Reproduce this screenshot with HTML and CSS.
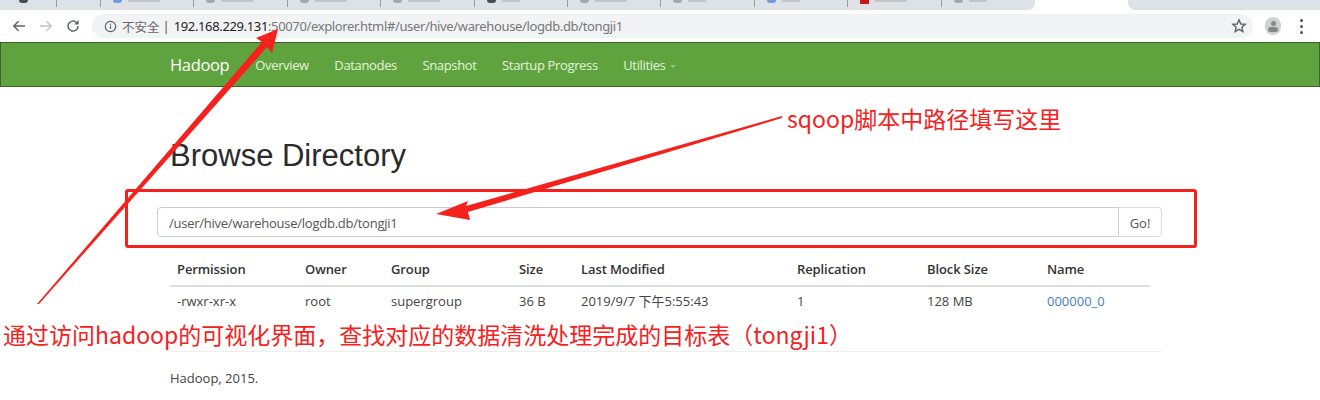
FILE: index.html
```html
<!DOCTYPE html>
<html lang="zh">
<head>
  <meta charset="UTF-8">
  <title>Browse Directory</title>
  <link rel="stylesheet" href="styles.css">
</head>
<body>
  <div class="tabstrip">
    <div class="tabs-left">
      <div class="tab tab-first"><span class="tab-fav fav-dark"></span></div>
      <div class="tab tab-small"></div>
      <div class="tab"><span class="tab-fav fav-blue"></span><span class="tab-text t2"></span></div>
      <div class="tab"><span class="tab-fav"></span><span class="tab-text t2"></span></div>
      <div class="tab"><span class="tab-fav"></span><span class="tab-text t2"></span></div>
      <div class="tab"><span class="tab-fav"></span><span class="tab-text t2"></span></div>
      <div class="tab"><span class="tab-fav fav-dark"></span><span class="tab-text t1"></span></div>
      <div class="tab"><span class="tab-fav"></span><span class="tab-text t2"></span></div>
      <div class="tab"><span class="tab-fav"></span><span class="tab-text t1"></span></div>
      <div class="tab"><span class="tab-fav fav-blue"></span><span class="tab-text t1"></span></div>
      <div class="tab"><span class="tab-fav fav-red"></span><span class="tab-text t2"></span></div>
      <div class="tab tab-last"><span class="tab-fav"></span><span class="tab-text t1"></span></div>
    </div>
    <div class="tab-active"><span class="tab-fav fav-dark"></span></div>
    <div class="tab-rest"><span class="tab-fav"></span></div>
  </div>

  <div class="toolbar">
    <svg class="nav-icon" viewBox="0 0 16 16"><path d="M14 8H3M7.500 3.200 2.800 8l4.700 4.800" fill="none" stroke="#5f6368" stroke-width="1.500"/></svg>
    <svg class="nav-icon" viewBox="0 0 16 16"><path d="M2 8h11M8.500 3.200 13.200 8l-4.700 4.800" fill="none" stroke="#c0c3c7" stroke-width="1.500"/></svg>
    <svg class="nav-icon" viewBox="0 0 16 16"><path d="M13 8a5 5 0 1 1-1.500-3.500" fill="none" stroke="#5f6368" stroke-width="1.500"/><path d="M13.600 2v4.400H9.200z" fill="#5f6368"/></svg>
    <div class="omnibox">
      <svg class="info-icon" viewBox="0 0 14 14"><circle cx="7" cy="7" r="5.600" fill="none" stroke="#5f6368" stroke-width="1.300"/><path d="M7 6.200v3.600M7 4v1.300" stroke="#5f6368" stroke-width="1.300"/></svg>
      <span class="not-secure">不安全</span>
      <span class="sep">|</span>
      <span class="url"><span class="host">192.168.229.131</span>:50070/explorer.html#/user/hive/warehouse/logdb.db/tongji1</span>
      <svg class="star" viewBox="0 0 16 16"><path d="M8 1.900 9.800 6l4.400.4-3.300 2.900 1 4.300L8 11.400l-3.900 2.200 1-4.300L1.800 6.400 6.200 6z" fill="none" stroke="#5f6368" stroke-width="1.400"/></svg>
    </div>
    <div class="avatar"><span class="avatar-head"></span><span class="avatar-body"></span></div>
    <div class="menu-dots"><span></span><span></span><span></span></div>
  </div>

  <nav class="navbar">
    <a class="brand">Hadoop</a>
    <a class="nav-link">Overview</a>
    <a class="nav-link">Datanodes</a>
    <a class="nav-link">Snapshot</a>
    <a class="nav-link">Startup Progress</a>
    <a class="nav-link">Utilities <span class="caret"></span></a>
  </nav>

  <div class="container">
    <h1>Browse Directory</h1>
    <div class="search-row">
      <div class="path-input">/user/hive/warehouse/logdb.db/tongji1</div>
      <div class="go-btn">Go!</div>
    </div>
    <table>
      <tr>
        <th class="c1">Permission</th><th class="c2">Owner</th><th class="c3">Group</th><th class="c4">Size</th>
        <th class="c5">Last Modified</th><th class="c6">Replication</th><th class="c7">Block Size</th><th>Name</th>
      </tr>
      <tr>
        <td>-rwxr-xr-x</td><td>root</td><td>supergroup</td><td>36 B</td>
        <td>2019/9/7 下午5:55:43</td><td>1</td><td>128 MB</td><td><a class="file-link">000000_0</a></td>
      </tr>
    </table>
    <hr class="foot-line">
    <p class="foot">Hadoop, 2015.</p>
  </div>

  <!-- annotations drawn over the screenshot -->
  <div class="red-box"></div>
  <svg class="arrows" width="1320" height="400" viewBox="0 0 1320 400">
    <path d="M37 304 L262 42 L256 38 L278 29 L272 53 L267 47 L39 304 Z" fill="#f5211d"/>
    <path d="M782 116 L466 206 L468 201 L436 214 L470 220 L468 212 L782 118 Z" fill="#f5211d"/>
  </svg>
  <div class="note note-path">sqoop脚本中路径填写这里</div>
  <div class="note note-main">通过访问hadoop的可视化界面，查找对应的数据清洗处理完成的目标表（tongji1）</div>
</body>
</html>
```

FILE: styles.css
```css
* {
  box-sizing: border-box;
}
body {
  margin: 0;
  width: 1320px;
  height: 400px;
  overflow: hidden;
  background-color: #fff;
  color: #333;
  font-family: "Open Sans", "Noto Sans CJK SC", sans-serif;
  font-size: 13px;
  position: relative;
}

/* browser chrome */
.tabstrip {
  display: flex;
  height: 10px;
  overflow: hidden;
}
.tabs-left {
  display: flex;
  width: 1035px;
  background-color: #dee1e6;
  border-bottom-right-radius: 7px;
}
.tab {
  width: 93.5px;
  height: 7px;
  display: flex;
  gap: 6px;
  padding-left: 12px;
  border-right: 1px solid #9a9ca0;
}
.tab-first {
  width: 57px;
  padding-left: 19px;
}
.tab-small {
  width: 44px;
}
.tab-last {
  border-right: 0;
}
.tab-fav {
  width: 9px;
  height: 3px;
  border-radius: 0 0 5px 5px;
  background-color: #a6a8ac;
}
.fav-dark { background-color: #4a4c50; }
.fav-blue { background-color: #6d9be3; }
.fav-red { background-color: #c8161d; border-radius: 0; height: 4px; }
.tab-text {
  height: 2px;
  background-color: #c2c4c8;
}
.t1 { width: 18px; }
.t2 { width: 32px; }
.tab-active {
  width: 93px;
  height: 10px;
  padding-left: 14px;
  background-color: #fff;
}
.tab-rest {
  flex: 1;
  padding-left: 16px;
  background-color: #dee1e6;
  border-bottom-left-radius: 7px;
}
.toolbar {
  height: 32px;
  display: flex;
  align-items: center;
  padding: 0 0 0 11px;
  background-color: #fff;
}
.nav-icon {
  width: 16px;
  height: 16px;
  margin-right: 11px;
}
.omnibox {
  width: 1161px;
  height: 24px;
  margin-left: 0;
  display: flex;
  align-items: center;
  padding: 0 6px 0 12px;
  background-color: #f1f3f4;
  border-radius: 12px;
  font-family: "Noto Sans", "Noto Sans CJK SC", sans-serif;
  font-size: 13px;
  color: #777;
}
.info-icon {
  width: 13px;
  height: 13px;
  margin-right: 5px;
}
.not-secure {
  font-size: 12.500px;
  color: #666;
}
.sep {
  margin: 0 4px 0 3px;
  color: #555;
}
.url {
  flex: 1;
  white-space: nowrap;
  letter-spacing: -0.36px;
}
.host {
  color: #222;
}
.star {
  width: 16px;
  height: 16px;
}
.avatar {
  width: 16px;
  height: 18px;
  margin-left: 12px;
  border-radius: 8px;
  background-color: #d0d1d3;
  display: flex;
  flex-direction: column;
  align-items: center;
  justify-content: center;
  gap: 1px;
}
.avatar-head {
  width: 5px;
  height: 5px;
  border-radius: 50%;
  background-color: #85878a;
}
.avatar-body {
  width: 10px;
  height: 5px;
  border-radius: 5px;
  background-color: #85878a;
}
.menu-dots {
  display: flex;
  flex-direction: column;
  gap: 3px;
  margin-left: 19px;
}
.menu-dots span {
  width: 3px;
  height: 3px;
  background-color: #555;
  border-radius: 50%;
}

/* hadoop page */
.navbar {
  height: 45px;
  display: flex;
  align-items: center;
  padding-left: 169px;
  background-color: #5fa33e;
  border: 1px solid #3f5f33;
  color: #e5f3dc;
  letter-spacing: -0.35px;
}
.brand {
  font-size: 16.500px;
  color: #fff;
  margin-right: 26px;
}
.nav-link {
  margin-right: 25.500px;
  white-space: nowrap;
}
.caret {
  display: inline-block;
  border-top: 3px solid #9cc78a;
  border-left: 3px solid transparent;
  border-right: 3px solid transparent;
  vertical-align: middle;
  margin-left: 2px;
}
.container {
  width: 980px;
  margin-left: 170px;
}
h1 {
  margin: 52px 0 0;
  height: 68px;
  font-family: "Liberation Sans", sans-serif;
  font-size: 31px;
  font-weight: 400;
  line-height: 34px;
  color: #2b2b2b;
}
.search-row {
  display: flex;
  width: 1005px;
  height: 30px;
  margin-left: -13px;
}
.path-input {
  flex: 1;
  padding: 6px 11px;
  border: 1px solid #ccc;
  border-radius: 4px 0 0 4px;
  color: #555;
  letter-spacing: -0.25px;
}
.go-btn {
  width: 43px;
  padding: 6px 0;
  text-align: center;
  border: 1px solid #ddd;
  border-left: 0;
  border-radius: 0 4px 4px 0;
  color: #555;
}
table {
  width: 980px;
  border-collapse: collapse;
  margin-top: 16px;
  table-layout: fixed;
}
th, td {
  padding: 5px 7px;
  text-align: left;
  line-height: 18px;
}
th {
  padding: 7px;
  font-weight: 600;
  letter-spacing: -0.1px;
  border-bottom: 2px solid #ddd;
}
td {
  color: #444;
}
.c1 { width: 128px; }
.c2 { width: 86px; }
.c3 { width: 128px; }
.c4 { width: 62px; }
.c5 { width: 216px; }
.c6 { width: 130px; }
.c7 { width: 120px; }
.file-link {
  color: #3f80b8;
}
.foot-line {
  width: 992px;
  margin: 36px 0 0;
  border: 0;
  border-top: 1px solid #eee;
}
.foot {
  margin: 17px 0 0;
  line-height: 18px;
  color: #444;
}

/* annotations */
.red-box {
  position: absolute;
  left: 125px;
  top: 189px;
  width: 1072px;
  height: 59px;
  border: 3px solid #f5211d;
  border-radius: 3px;
}
.arrows {
  position: absolute;
  left: 0;
  top: 0;
}
.note {
  position: absolute;
  font-family: "Noto Sans CJK SC", sans-serif;
  font-size: 23px;
  line-height: 34px;
  color: #f5211d;
  white-space: nowrap;
}
.note-path {
  left: 787px;
  top: 101px;
}
.note-main {
  left: 3px;
  top: 317px;
}
```
